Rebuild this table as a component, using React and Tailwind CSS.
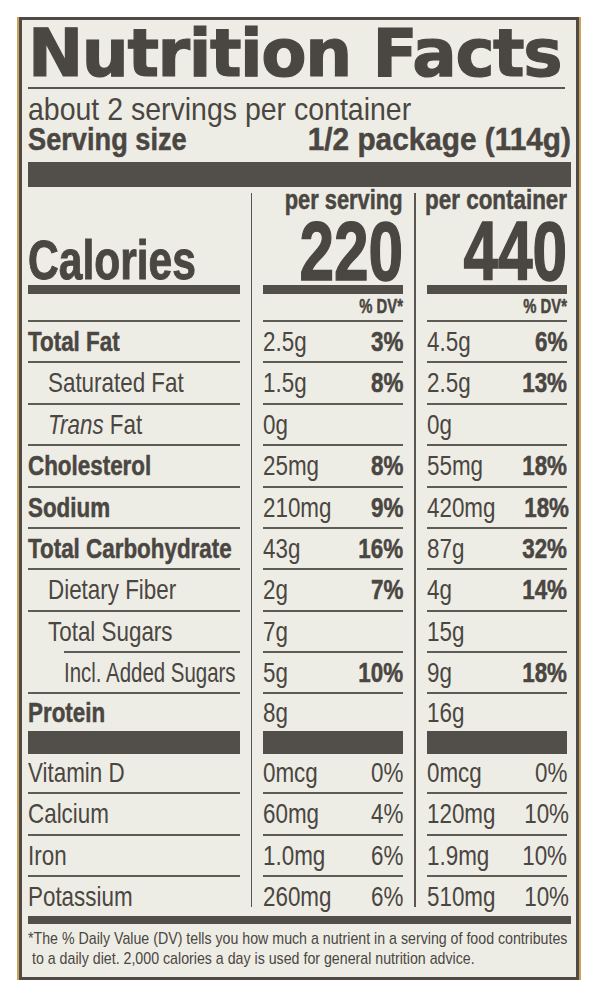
import React from "react";

const sans = "font-['Liberation_Sans','Arial',sans-serif]";
const heavy = "[-webkit-text-stroke:0.5px_currentColor]";

// main nutrient rows, heights add up to the 322 -> 694 band
const nutrients = [
  { name: "Total Fat", bold: true, a: "2.5g", ad: "3%", b: "4.5g", bd: "6%", h: "h-[41px]" },
  { name: "Saturated Fat", indent: 1, a: "1.5g", ad: "8%", b: "2.5g", bd: "13%", h: "h-[42px]" },
  { name: "Fat", trans: true, indent: 1, a: "0g", b: "0g", h: "h-[41px]" },
  { name: "Cholesterol", bold: true, a: "25mg", ad: "8%", b: "55mg", bd: "18%", h: "h-[42px]" },
  { name: "Sodium", bold: true, a: "210mg", ad: "9%", b: "420mg", bd: "18%", h: "h-[41px]" },
  { name: "Total Carbohydrate", bold: true, a: "43g", ad: "16%", b: "87g", bd: "32%", h: "h-[41px]" },
  { name: "Dietary Fiber", indent: 1, a: "2g", ad: "7%", b: "4g", bd: "14%", h: "h-[42px]" },
  { name: "Total Sugars", indent: 1, a: "7g", b: "15g", shortLine: true, h: "h-[41px]" },
  { name: "Incl. Added Sugars", indent: 2, tight: true, a: "5g", ad: "10%", b: "9g", bd: "18%", h: "h-[41px]" },
];

const vitamins = [
  { name: "Vitamin D", a: "0mcg", ad: "0%", b: "0mcg", bd: "0%", h: "h-[40px]" },
  { name: "Calcium", a: "60mg", ad: "4%", b: "120mg", bd: "10%", h: "h-[42px]" },
  { name: "Iron", a: "1.0mg", ad: "6%", b: "1.9mg", bd: "10%", h: "h-[41px]" },
  { name: "Potassium", a: "260mg", ad: "6%", b: "510mg", bd: "10%", h: "h-[39px]", last: true },
];

const grid = "grid grid-cols-[212px_23px_140px_24px_140px]";

// label type is a condensed grotesk: squeeze Liberation Sans sideways
function L({ children, className = "scale-x-[0.8]" }) {
  return <span className={`inline-block origin-left whitespace-nowrap ${className}`}>{children}</span>;
}
function R({ children, className = "" }) {
  return <span className={`inline-block origin-right whitespace-nowrap scale-x-[0.8] ${className}`}>{children}</span>;
}

function Gap({ className = "" }) {
  return (
    <div className={`flex justify-center ${className}`}>
      <div className="w-[1.5px] bg-[#5a5550]" />
    </div>
  );
}

function Cell({ children, line = true, shortLine, className = "" }) {
  return (
    <div className="flex flex-col">
      <div className={`flex flex-1 items-center justify-between ${className}`}>{children}</div>
      {line && <div className={`h-[2px] bg-[#5e5a54] ${shortLine ? "ml-[36px]" : ""}`} />}
    </div>
  );
}

function NutrientRow({ row, boldDv = true }) {
  const pad = row.indent === 2 ? "pl-[36px]" : row.indent === 1 ? "pl-[20px]" : "";
  const line = !row.last;
  const dv = boldDv ? `font-bold ${heavy}` : "";
  const nameCls = `${row.tight ? "scale-x-[0.73]" : "scale-x-[0.8]"} ${row.bold ? `font-bold ${heavy}` : ""}`;
  return (
    <div className={`${grid} ${row.h} text-[28px] leading-none`}>
      <Cell line={line} shortLine={row.shortLine} className={pad}>
        <L className={nameCls}>
          {row.trans && <span className="italic">Trans </span>}
          {row.name}
        </L>
      </Cell>
      <Gap className={row.last ? "h-[30px]" : ""} />
      <Cell line={line}>
        <L>{row.a}</L>
        {row.ad && <R className={dv}>{row.ad}</R>}
      </Cell>
      <Gap className={row.last ? "h-[30px]" : ""} />
      <Cell line={line}>
        <L>{row.b}</L>
        {row.bd && <R className={dv}>{row.bd}</R>}
      </Cell>
    </div>
  );
}

function BarRow({ h }) {
  return (
    <div className={`${grid} ${h}`}>
      <div className="bg-[#524e49]" />
      <Gap />
      <div className="bg-[#524e49]" />
      <Gap />
      <div className="bg-[#524e49]" />
    </div>
  );
}

export default function App() {
  return (
    <div className="min-h-screen overflow-hidden bg-white pt-[17px] pl-[17px]">
      <div className="w-[564px] bg-[#c9a35a] px-[2px]">
        <div className={`border-[3px] border-[#4f4a45] bg-[#eeede5] pl-[6px] pr-[5px] pb-[8px] text-[#4a4642] ${sans}`}>
          <h1 className="whitespace-nowrap pt-[1px] font-['DejaVu_Sans',sans-serif] text-[66px] font-bold leading-none tracking-[-1.4px] [-webkit-text-stroke:1.2px_currentColor]">
            Nutrition Facts
          </h1>
          <div className="h-[2px] w-[537px] bg-[#5a5550]" />

          <div className="mt-[5px] text-[32px] leading-[30px]">
            <span className="inline-block origin-left whitespace-nowrap scale-x-[0.89]">about 2 servings per container</span>
          </div>
          <div className={`flex justify-between text-[32px] font-bold leading-[30px] ${heavy}`}>
            <span className="inline-block origin-left whitespace-nowrap scale-x-[0.85]">Serving size</span>
            <span className="inline-block origin-right whitespace-nowrap scale-x-[0.93]">1/2 package (114g)</span>
          </div>
          <div className="mt-[8px] h-[25px] bg-[#524e49]" />

          {/* calories header */}
          <div className={`${grid} h-[98px]`}>
            <div className="flex items-end">
              <span className="inline-block origin-left whitespace-nowrap scale-x-[0.76] text-[56px] font-bold leading-[50px] [-webkit-text-stroke:1px_currentColor]">
                Calories
              </span>
            </div>
            <Gap className="pt-[6px]" />
            <div className="flex flex-col items-end font-bold">
              <span className={`inline-block origin-right whitespace-nowrap scale-x-[0.81] text-[27px] leading-[27px] ${heavy}`}>per serving</span>
              <span className="mt-[6px] inline-block origin-right whitespace-nowrap scale-x-[0.74] text-[84px] leading-[62px] [-webkit-text-stroke:1.5px_currentColor]">220</span>
            </div>
            <Gap className="pt-[6px]" />
            <div className="flex flex-col items-end font-bold">
              <span className={`inline-block origin-right whitespace-nowrap scale-x-[0.83] text-[27px] leading-[27px] ${heavy}`}>per container</span>
              <span className="mt-[6px] inline-block origin-right whitespace-nowrap scale-x-[0.74] text-[84px] leading-[62px] [-webkit-text-stroke:1.5px_currentColor]">440</span>
            </div>
          </div>
          <BarRow h="h-[9px]" />
          <div className={`${grid} h-[28px] text-[20px] font-bold leading-[20px]`}>
            <Cell />
            <Gap />
            <Cell className="items-end justify-end pb-[4px]">
              <span className={`inline-block origin-right whitespace-nowrap scale-x-[0.74] ${heavy}`}>% DV*</span>
            </Cell>
            <Gap />
            <Cell className="items-end justify-end pb-[4px]">
              <span className={`inline-block origin-right whitespace-nowrap scale-x-[0.74] ${heavy}`}>% DV*</span>
            </Cell>
          </div>

          {nutrients.map((row) => (
            <NutrientRow key={row.name} row={row} />
          ))}

          <div className={`${grid} h-[37px] text-[28px] leading-none`}>
            <Cell line={false}>
              <L className={`scale-x-[0.8] font-bold ${heavy}`}>Protein</L>
            </Cell>
            <Gap />
            <Cell line={false}>
              <L>8g</L>
            </Cell>
            <Gap />
            <Cell line={false}>
              <L>16g</L>
            </Cell>
          </div>
          <BarRow h="h-[23px]" />

          {vitamins.map((row) => (
            <NutrientRow key={row.name} row={row} boldDv={false} />
          ))}

          <div className="h-[8px] bg-[#524e49]" />

          <div className="mt-[5px] text-[17px] leading-[20px]">
            <div>
              <span className="inline-block origin-left whitespace-nowrap scale-x-[0.835]">
                *The % Daily Value (DV) tells you how much a nutrient in a serving of food contributes
              </span>
            </div>
            <div className="pl-[4px]">
              <span className="inline-block origin-left whitespace-nowrap scale-x-[0.835]">
                to a daily diet. 2,000 calories a day is used for general nutrition advice.
              </span>
            </div>
          </div>
        </div>
      </div>
    </div>
  );
}
